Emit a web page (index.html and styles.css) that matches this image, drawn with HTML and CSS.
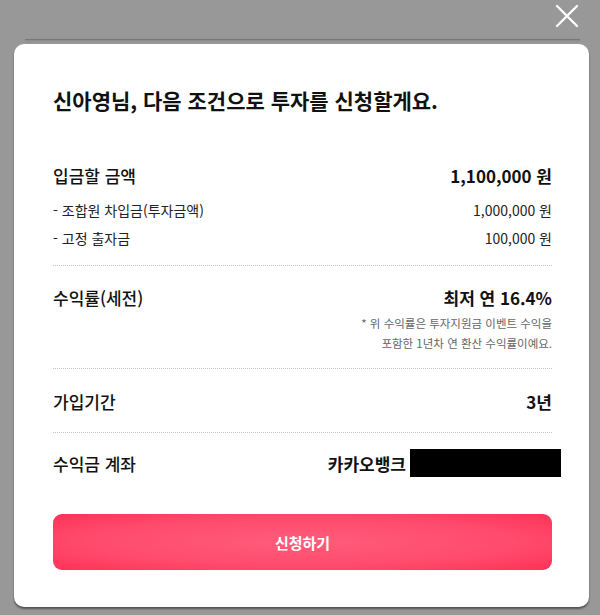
FILE: index.html
```html
<!DOCTYPE html>
<html lang="ko">
<head>
    <meta charset="UTF-8">
    <meta name="viewport" content="width=device-width, initial-scale=1.0">
    <title>투자 신청</title>
    <link rel="stylesheet" href="styles.css">
</head>
<body>

    <div class="topbar">
        <button class="close-btn" aria-label="닫기">
            <svg width="24" height="24" viewBox="0 0 24 24">
                <path d="M2 2 L22 22 M22 2 L2 22" stroke="#fff" stroke-width="2.4" stroke-linecap="round" fill="none"/>
            </svg>
        </button>
    </div>
    <div class="sheet-edge"></div>

    <div class="card">
        <h1 class="card-title">신아영님, 다음 조건으로 투자를 신청할게요.</h1>

        <!-- 입금할 금액 -->
        <div class="section section-amount">
            <div class="row">
                <span class="label">입금할 금액</span>
                <span class="value">1,100,000 원</span>
            </div>
            <div class="sub-row first">
                <span>- 조합원 차입금(투자금액)</span>
                <span>1,000,000 원</span>
            </div>
            <div class="sub-row">
                <span>- 고정 출자금</span>
                <span>100,000 원</span>
            </div>
        </div>

        <!-- 수익률 -->
        <div class="section section-rate">
            <div class="row">
                <span class="label">수익률(세전)</span>
                <span class="value">최저 연 16.4%</span>
            </div>
            <p class="note">* 위 수익률은 투자지원금 이벤트 수익을<br>포함한 1년차 연 환산 수익률이예요.</p>
        </div>

        <!-- 가입기간 -->
        <div class="section section-period">
            <div class="row">
                <span class="label">가입기간</span>
                <span class="value">3년</span>
            </div>
        </div>

        <!-- 수익금 계좌 -->
        <div class="section section-account">
            <div class="row">
                <span class="label">수익금 계좌</span>
                <span class="account">
                    <span class="value">카카오뱅크</span>
                    <span class="masked"></span>
                </span>
            </div>
        </div>

        <button class="submit-btn">신청하기</button>
    </div>

</body>
</html>
```

FILE: styles.css
```css
body {
    margin: 0;
    padding: 0;
    height: 615px;
    overflow: hidden;
    background-color: #989898;
    font-family: 'Noto Sans CJK KR', 'Noto Sans', sans-serif;
    color: #111;
}

/* Top - close button */
.topbar {
    height: 39px;
    display: flex;
    justify-content: flex-end;
    align-items: flex-start;
    padding-right: 21px;
    box-sizing: border-box;
}

.close-btn {
    background: none;
    border: none;
    padding: 0;
    margin-top: 4px;
    width: 24px;
    height: 24px;
    cursor: pointer;
}

.sheet-edge {
    height: 1px;
    margin: 0 20px 0 25px;
    background-color: #777;
    box-shadow: 0 1px 2px rgba(0, 0, 0, 0.15);
}

/* Card */
.card {
    margin: 4px 11px 0 14px;
    background-color: #fff;
    border-radius: 10px;
    padding: 41px 37px 37px 39px;
    box-shadow: 0 2px 2px rgba(0, 0, 0, 0.45);
}

.card-title {
    margin: 0 0 47px;
    font-size: 21px;
    line-height: 30px;
    font-weight: 700;
    color: #111;
}

.section {
    border-bottom: 1px dotted #c4c4c4;
}

.section-amount {
    padding-bottom: 16px;
}

.section-rate {
    padding: 18px 0 15px;
}

.section-period {
    padding: 19px 0 18px;
}

.section-account {
    padding-top: 17px;
    border-bottom: none;
}

.row {
    display: flex;
    justify-content: space-between;
    align-items: center;
    height: 26px;
}

.label {
    font-size: 17px;
    font-weight: 500;
}

.value {
    font-size: 17px;
    font-weight: 700;
}

.sub-row {
    display: flex;
    justify-content: space-between;
    font-size: 14px;
    line-height: 22px;
    color: #222;
    margin-top: 6px;
}

.sub-row.first {
    margin-top: 11px;
}

.note {
    margin: 3px 0 0;
    text-align: right;
    font-size: 11.5px;
    line-height: 20px;
    color: #666;
}

.account {
    display: flex;
    align-items: center;
    gap: 4px;
    margin-right: -9px;
}

.masked {
    width: 151px;
    height: 28px;
    background-color: #000;
}

/* Submit */
.submit-btn {
    display: block;
    width: 100%;
    height: 56px;
    margin-top: 38px;
    border: none;
    border-radius: 9px;
    background: radial-gradient(ellipse at center, #ff5c7b 0%, #ff4b6d 60%, #ff3157 100%);
    color: #fff;
    font-family: inherit;
    font-size: 15px;
    font-weight: 700;
    cursor: pointer;
}
```
